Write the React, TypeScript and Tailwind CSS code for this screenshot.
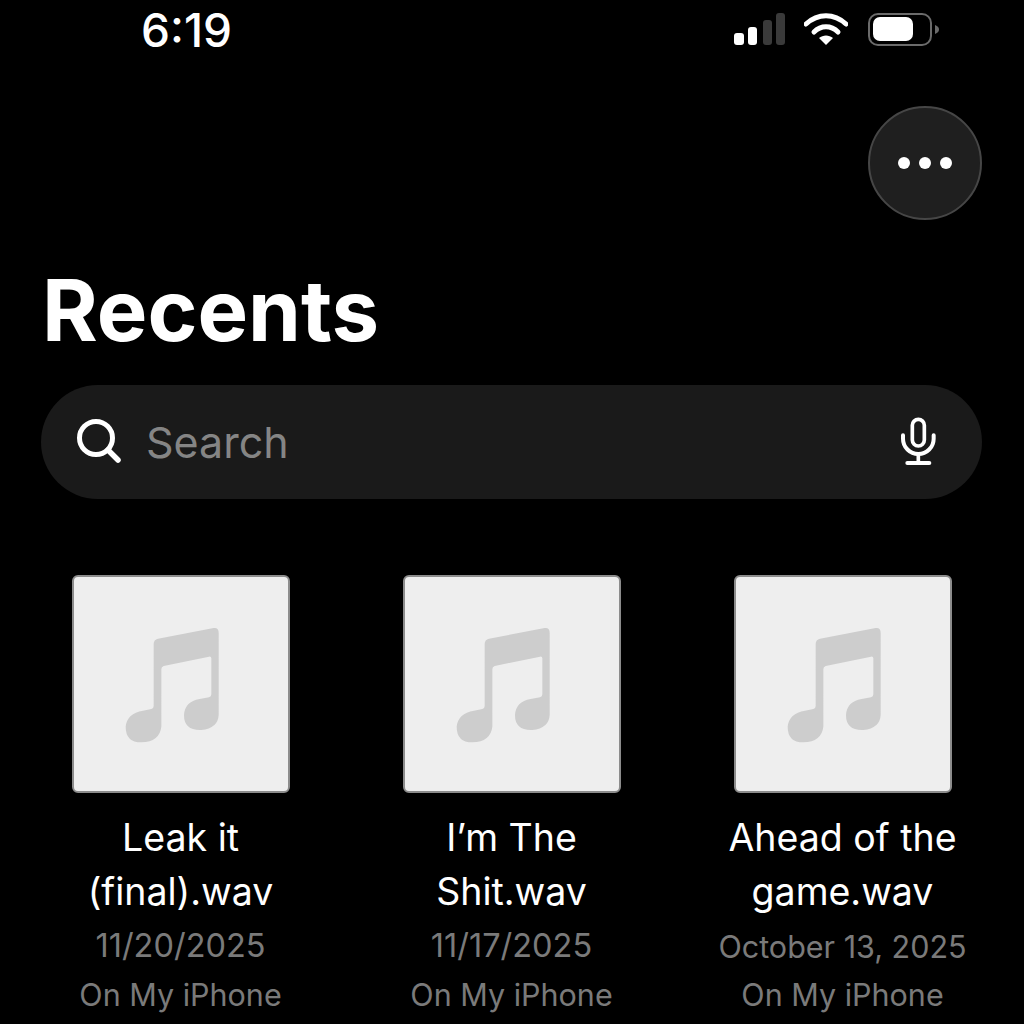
const files = [
  { name: ["Leak it", "(final).wav"], date: "11/20/2025", dateClass: "text-[32.5px] leading-[48px]" },
  { name: ["I’m The", "Shit.wav"], date: "11/17/2025", dateClass: "text-[32.5px] leading-[48px]" },
  { name: ["Ahead of the", "game.wav"], date: "October 13, 2025", dateClass: "text-[30.5px] leading-[48px] pt-[1px] -mb-[1px]" },
];

function SignalIcon() {
  return (
    <svg width="51" height="32" viewBox="0 0 51 32">
      <rect x="0" y="20" width="10" height="12" rx="3" fill="#fff" />
      <rect x="14" y="14" width="9" height="18" rx="3" fill="#fff" />
      <rect x="29" y="7" width="9" height="25" rx="3" fill="#3a3a3a" />
      <rect x="42" y="0" width="9" height="32" rx="3" fill="#3a3a3a" />
    </svg>
  );
}

function WifiIcon() {
  return (
    <svg width="44" height="32" viewBox="0 0 44 32">
      <path d="M2 11 C 14 0, 30 0, 42 11" fill="none" stroke="#fff" strokeWidth="5" strokeLinecap="round" />
      <path d="M10 19 C 17 12, 27 12, 34 19" fill="none" stroke="#fff" strokeWidth="5" strokeLinecap="round" />
      <path d="M22 32 L15 25 C 19 21.5, 25 21.5, 29 25 Z" fill="#fff" />
    </svg>
  );
}

function BatteryIcon() {
  return (
    <svg width="71" height="33" viewBox="0 0 71 33">
      <rect x="1" y="1" width="62" height="31" rx="9" fill="none" stroke="#6b6b6b" strokeWidth="2" />
      <rect x="5" y="4" width="40" height="24" rx="7" fill="#fff" />
      <path d="M67 12 C 70 13, 71 15, 71 16.5 C 71 18, 70 20, 67 21 Z" fill="#6b6b6b" />
    </svg>
  );
}

function SearchIcon() {
  return (
    <svg width="46" height="46" viewBox="0 0 46 46" fill="none" stroke="#fff" strokeLinecap="round">
      <circle cx="20" cy="19" r="16.5" strokeWidth="5" />
      <path d="M32 31 L42 41" strokeWidth="5.5" />
    </svg>
  );
}

function MicIcon() {
  return (
    <svg width="36" height="50" viewBox="120 80 108 150" fill="none" stroke="#fff" strokeLinecap="round">
      <rect x="157" y="87" width="36" height="80" rx="18" strokeWidth="11" />
      <path d="M129 135 V145 A46 46 0 0 0 221 145 V135" strokeWidth="12" />
      <path d="M175 192 V218" strokeWidth="11" />
      <path d="M142 218 H208" strokeWidth="12" />
    </svg>
  );
}

function MusicNote() {
  return (
    <svg className="w-[218px] h-[218px]" viewBox="67 45 654 654">
      <path
        d="M325 236 L492 204 Q507 202 507 218 L507 465 Q505 505 455 510 Q403 512 403 465 Q405 425 450 417 L478 412 Q485 410 485 403 L485 295 Q485 289 478 290 L342 318 Q335 320 335 328 L335 500 Q330 545 275 547 Q228 547 228 500 Q232 460 280 452 L305 447 Q312 445 312 438 L312 252 Q312 239 325 236 Z"
        fill="#cdcdcd"
      />
    </svg>
  );
}

export default function App() {
  return (
    <div className="w-[1024px] h-[1024px] overflow-hidden bg-black text-white font-['Inter',sans-serif]">
      {/* Status bar */}
      <div className="flex items-start justify-between pl-[141px] pr-[85px] pt-[13px] h-[106px]">
        <span className="text-[46px] leading-[34px] font-medium">6:19</span>
        <div className="flex items-start">
          <SignalIcon />
          <div className="ml-[19px]">
            <WifiIcon />
          </div>
          <div className="ml-[20px]">
            <BatteryIcon />
          </div>
        </div>
      </div>

      {/* More button */}
      <div className="flex justify-end pr-[42px]">
        <button className="w-[114px] h-[114px] rounded-full bg-[#1f1f1f] border-2 border-[#464646] flex items-center justify-center gap-[9px]">
          <span className="w-[12px] h-[12px] rounded-full bg-white" />
          <span className="w-[12px] h-[12px] rounded-full bg-white" />
          <span className="w-[12px] h-[12px] rounded-full bg-white" />
        </button>
      </div>

      <h1 className="pl-[42px] mt-[45px] -mb-[1px] text-[85px] leading-[92px] font-bold">Recents</h1>

      {/* Search */}
      <div className="mx-[41px] mt-[29px] h-[114px] w-[941px] rounded-full bg-[#1a1a1a] flex items-center pl-[35px] pr-[46px]">
        <SearchIcon />
        <span className="ml-[24px] text-[43px] text-[#858585] flex-1">Search</span>
        <MicIcon />
      </div>

      {/* Files */}
      <div className="grid grid-cols-3 w-[993px] ml-[15px] mt-[76px]">
        {files.map((file) => (
          <div key={file.date} className="flex flex-col items-center">
            <div className="w-[218px] h-[218px] rounded-[6px] bg-[#eeeeee] border-2 border-[#8c8c8c]">
              <div className="-m-[2px]">
                <MusicNote />
              </div>
            </div>
            <div className="mt-[18px] text-[37.5px] leading-[54px] text-center">
              <div>{file.name[0]}</div>
              <div>{file.name[1]}</div>
            </div>
            <div className={`mt-[3px] text-[#7a7a7a] ${file.dateClass}`}>{file.date}</div>
            <div className="text-[30.5px] leading-[50px] text-[#7a7a7a]">On My iPhone</div>
          </div>
        ))}
      </div>
    </div>
  );
}
